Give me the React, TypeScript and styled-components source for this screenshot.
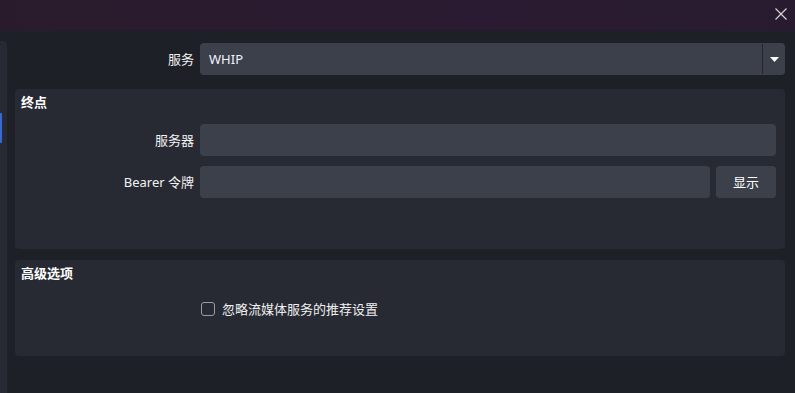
import styled, { createGlobalStyle } from 'styled-components';

const GlobalStyle = createGlobalStyle`
    html, body {
        margin: 0;
        padding: 0;
        background: #1e2028;
        font-family: "Noto Sans", "Noto Sans CJK SC", sans-serif;
        font-size: 13px;
        color: #f0f0f0;
        overflow: hidden;
    }
`;

const Window = styled.div`
    width: 795px;
    height: 393px;
    display: flex;
    flex-direction: column;
    background: #1e2028;
`;

const TitleBar = styled.div`
    height: 31px;
    flex-shrink: 0;
    display: flex;
    justify-content: flex-end;
    align-items: flex-start;
    background: linear-gradient(90deg, #2a1b2c 0%, #2b1b32 60%, #281b2f 100%);
`;

const CloseButton = styled.div`
    width: 14px;
    height: 14px;
    margin: 7px 7px 0 0;
    display: flex;
`;

const Body = styled.div`
    flex: 1;
    display: flex;
`;

const Sidebar = styled.div`
    width: 7px;
    margin-top: 10px;
    padding-top: 72px;
    background: #282a33;
    border-top-right-radius: 4px;
    box-sizing: border-box;
`;

const Indicator = styled.div`
    width: 2px;
    height: 30px;
    background: #3a68d8;
    border-radius: 0 1px 1px 0;
`;

const Content = styled.div`
    flex: 1;
    padding: 12px 10px 0 8px;
    display: flex;
    flex-direction: column;
`;

const Row = styled.div<{ $labelWidth: number }>`
    display: grid;
    grid-template-columns: ${p => p.$labelWidth}px 1fr;
    column-gap: 6px;
    align-items: center;
`;

const Label = styled.div`
    text-align: right;
    white-space: nowrap;
    color: #f2f2f2;
    padding-bottom: 2px;
`;

const Combo = styled.div`
    height: 32px;
    display: flex;
    align-items: stretch;
    background: #3c404b;
    border-radius: 4px;
`;

const ComboValue = styled.div`
    flex: 1;
    display: flex;
    align-items: center;
    padding: 0 0 1px 9px;
    color: #f0f3ff;
`;

const ComboArrow = styled.div`
    width: 22px;
    border-left: 1px solid #23252c;
    margin: 1px 0;
    display: flex;
    align-items: center;
    justify-content: center;
`;

const Group = styled.div<{ $height: number }>`
    margin-top: ${p => p.$height > 100 ? 14 : 11}px;
    height: ${p => p.$height}px;
    box-sizing: border-box;
    background: #272a33;
    border-radius: 4px;
    padding: 3px 9px 0 6px;
`;

const GroupTitle = styled.div`
    height: 20px;
    line-height: 20px;
    font-weight: 700;
    color: #ffffff;
`;

const Form = styled.div`
    margin-top: 12px;
    display: flex;
    flex-direction: column;
    gap: 10px;
`;

const Field = styled.div`
    display: flex;
    gap: 6px;
`;

const Input = styled.div`
    flex: 1;
    height: 32px;
    background: #3c404b;
    border-radius: 4px;
`;

const Button = styled.div`
    width: 60px;
    height: 32px;
    padding-bottom: 1px;
    box-sizing: border-box;
    display: flex;
    align-items: center;
    justify-content: center;
    background: #3c404b;
    border-radius: 4px;
    color: #ffffff;
`;

const CheckRow = styled.div`
    margin-top: 16px;
    padding-left: 180px;
    display: flex;
    align-items: center;
    gap: 7px;
`;

const CheckBox = styled.div`
    width: 14px;
    height: 14px;
    box-sizing: border-box;
    border: 1px solid #9a9ca4;
    border-radius: 3px;
`;

function App() {
    return (
        <Window>
            <GlobalStyle />
            <TitleBar>
                <CloseButton>
                    <svg width="14" height="14" viewBox="0 0 14 14">
                        <path d="M1.5 1.5 L12.5 12.5 M12.5 1.5 L1.5 12.5" stroke="#d8d8dc" strokeWidth="1.1" fill="none" />
                    </svg>
                </CloseButton>
            </TitleBar>
            <Body>
                <Sidebar>
                    <Indicator />
                </Sidebar>
                <Content>
                    <Row $labelWidth={179}>
                        <Label>服务</Label>
                        <Combo>
                            <ComboValue>WHIP</ComboValue>
                            <ComboArrow>
                                <svg width="9" height="5" viewBox="0 0 9 5">
                                    <path d="M0 0 L9 0 L4.5 5 Z" fill="#ffffff" />
                                </svg>
                            </ComboArrow>
                        </Combo>
                    </Row>
                    <Group $height={160}>
                        <GroupTitle>终点</GroupTitle>
                        <Form>
                            <Row $labelWidth={173}>
                                <Label>服务器</Label>
                                <Input />
                            </Row>
                            <Row $labelWidth={173}>
                                <Label>Bearer 令牌</Label>
                                <Field>
                                    <Input />
                                    <Button>显示</Button>
                                </Field>
                            </Row>
                        </Form>
                    </Group>
                    <Group $height={96}>
                        <GroupTitle>高级选项</GroupTitle>
                        <CheckRow>
                            <CheckBox />
                            <span>忽略流媒体服务的推荐设置</span>
                        </CheckRow>
                    </Group>
                </Content>
            </Body>
        </Window>
    );
}

export default App;
